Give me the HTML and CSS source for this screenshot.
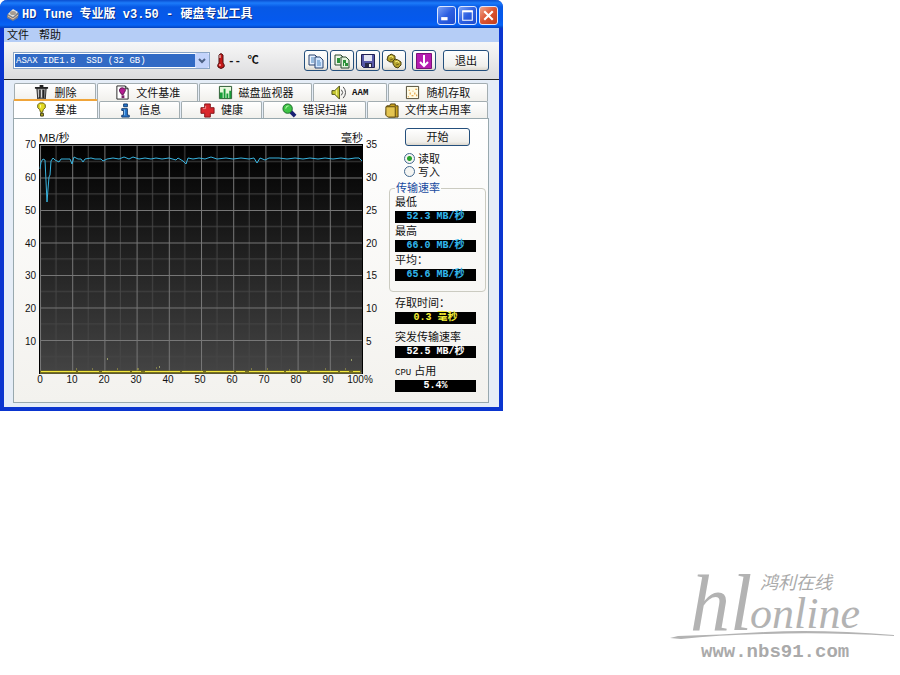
FILE: index.html
```html
<!DOCTYPE html>
<html lang="zh-CN">
<head>
<meta charset="utf-8">
<title>HD Tune 专业版</title>
<link rel="stylesheet" href="styles.css">
</head>
<body>
<div class="page">
<main class="window">
  <header class="titlebar">
    <svg class="app-icon" viewBox="0 0 14 14" aria-hidden="true"><path d="M1 7 6 2l7 3-1 5-5 3-6-3z" fill="#777e8c"/><path d="M2 6 7 1l5 3-5 5z" fill="#dfe1df"/><ellipse cx="7" cy="5" rx="3" ry="2" fill="#a69b90"/><path d="m2 8 5 3 5-4" fill="none" stroke="#f0c8a0"/></svg>
    <h1 class="title">HD Tune 专业版 v3.50 - 硬盘专业工具</h1>
    <button class="caption" aria-label="最小化"><svg viewBox="0 0 16 16"><path d="M3 11h6" stroke="#fff" stroke-width="3"/></svg></button>
    <button class="caption" aria-label="最大化"><svg viewBox="0 0 16 16"><path d="M3.500 4v8.500h9V4" fill="none" stroke="#fff"/><path d="M3 4h10" stroke="#fff" stroke-width="2"/></svg></button>
    <button class="caption caption-close" aria-label="关闭"><svg viewBox="0 0 16 16"><path d="m4 4 8 8m0-8-8 8" stroke="#fff" stroke-width="2"/></svg></button>
  </header>
  <nav class="menubar"><button class="menu">文件</button><button class="menu">帮助</button></nav>
  <div class="toolbar">
    <div class="drive">
      <select class="drive-select" aria-label="硬盘"><option>ASAX IDE1.8&nbsp; SSD (32 GB)</option></select>
      <svg class="drive-arrow" viewBox="0 0 14 15" aria-hidden="true"><rect width="14" height="15" rx="2" fill="#c3d3fb"/><path d="m4 6 3 3 3-3" fill="none" stroke="#4d6185" stroke-width="2"/></svg>
    </div>
    <svg class="thermo" viewBox="0 0 10 18" aria-hidden="true"><path d="M3 3q2-3 4 0v8q2 2 1 4-3 3-6 0-1-2 1-4z" fill="#c31818" stroke="#501010"/><path d="M4 3v3" stroke="#eee"/><circle cx="4" cy="13" r="1" fill="#ff9a9a"/></svg>
    <span class="temp">-- ℃</span>
    <div class="tools">
      <button class="tool" aria-label="复制文本"><svg viewBox="0 0 16 16"><path d="M1 2h6l2 2v8H1z" fill="#e8f2ff" stroke="#28426e"/><path d="M7 4h5l3 3v8H7z" fill="#d4e7ff" stroke="#28426e"/><path d="M3 5h3M3 7h3M3 9h3m3-1h3m-3 2h4m-4 2h4" stroke="#4b84bd"/></svg></button>
      <button class="tool" aria-label="复制图像"><svg viewBox="0 0 16 16"><path d="M1 2h6l2 2v8H1z" fill="#eef7e8" stroke="#2b4930"/><path d="M7 4h5l3 3v8H7z" fill="#e2f4dc" stroke="#2b4930"/><path d="M3 5h3v5H3zm6 2h3v3H9zm2 3h3v3h-3zM9 10h1v3H9z" fill="#2b9238"/></svg></button>
      <button class="tool" aria-label="保存"><svg viewBox="0 0 16 16"><path d="M1.500 1.500h13v13h-11l-2-2z" fill="#5759a8" stroke="#202052"/><path d="M4 2h8v6H4z" fill="#e3e5f2"/><path d="M5 10h7v4H5z" fill="#292b48"/><path d="M9 11h2v3H9z" fill="#eee"/></svg></button>
      <button class="tool" aria-label="选项"><svg viewBox="0 0 16 16"><g fill="#b5a32d" stroke="#4c4210"><path d="m2 3 2-1 1-1 2 1 2 1v3L7 9H4L1 7z"/><path d="m7 8 2-2 3 1 3 2v3l-3 3-3-1-2-3z"/></g><path d="m3 4 3-1 1 2m2 4 3-1 1 2" fill="none" stroke="#f7ed79"/><path d="m4 7 3-1m3 6 3-1" stroke="#75671a"/></svg></button>
      <button class="tool tool-gap" aria-label="最小化到托盘"><svg viewBox="0 0 16 16"><path fill="#b51cb0" stroke="#7c1278" d="M.5.5h15v15H.5z"/><path d="M8 2v11M4 9l4 4 4-4" fill="none" stroke="#fff" stroke-width="2"/></svg></button>
      <button class="exit">退出</button>
    </div>
  </div>
  <div class="workspace">
    <div class="tabs" role="tablist">
      <div class="tab-row tab-row-back">
        <button class="tab" role="tab"><svg viewBox="0 0 16 16"><path d="M3 3h10l-1 12H4z" fill="#999" stroke="#222"/><path d="M1 3h14M6 1h4M6 5v9m4-9v9" stroke="#222" stroke-width="2"/><path d="M5 5v8m3-8v8" stroke="#ddd"/></svg>删除</button>
        <button class="tab" role="tab"><svg viewBox="0 0 16 16"><path d="M2 1h9l3 3v11H2z" fill="#fff" stroke="#222"/><path d="M11 1v3h3" fill="none" stroke="#222"/><path d="M8 3q5 1 2 5L9 10H7L5 7q-1-4 3-4z" fill="#b51c91" stroke="#57134c"/><path d="M7 11h3v3H7z" fill="#792266"/></svg>文件基准</button>
        <button class="tab" role="tab"><svg viewBox="0 0 16 16"><path d="M1.500 1.500h13v13h-13z" fill="#e7f9dc" stroke="#23532b"/><path d="M2 8h3v6H2zm4-4h2v10H6zm3 5h2v5H9zm3-3h2v8h-2z" fill="#179c38"/></svg>磁盘监视器</button>
        <button class="tab" role="tab"><svg viewBox="0 0 16 16"><path d="M1 6h3l5-5v14l-5-5H1z" fill="#c7c933" stroke="#484b13"/><path d="M6 5v6" stroke="#f7f995"/><path d="M11 5q3 3 0 6m2-9q5 6 0 12" fill="none" stroke="#444"/></svg><span class="tab-latin">AAM</span></button>
        <button class="tab" role="tab"><svg viewBox="0 0 16 16"><path d="M1.500 1.500h13v13h-13z" fill="#fffbe4" stroke="#4a4430"/><path d="M3 12h1v1H3zm2-4h1v2H5zm2 3h2v1H7zm1-5h1v1H8zm2 2h1v2h-1zm1-4h2v1h-2zm1 6h1v2h-1zM4 5h1v1H4z" fill="#e08d1a"/></svg>随机存取</button>
      </div>
      <div class="tab-row tab-row-front">
        <button class="tab tab-active" role="tab" aria-selected="true"><svg viewBox="0 0 16 16"><path d="M6 1h4l2 2v3l-2 2-1 3H7L6 8 4 6V3z" fill="#e2d922" stroke="#5b560c"/><path d="M7 3v3" stroke="#fffbb0"/><path d="M7 12h3v3H7z" fill="#b5ab20" stroke="#3c390d"/></svg>基准</button>
        <button class="tab" role="tab"><svg viewBox="0 0 16 16"><path d="M6 1h4v3H6zM4 6h6v7h2v2H4v-2h2V8H4z" fill="#2676ce" stroke="#103a6d"/><path d="M7 7v6" stroke="#82c2f5"/></svg>信息</button>
        <button class="tab" role="tab"><svg viewBox="0 0 16 16"><path d="M5 1h6v4h4v6h-4v4H5v-4H1V5h4z" fill="#d9272d" stroke="#811216"/><path d="M6 3v3H3" fill="none" stroke="#f58e8e"/></svg>健康</button>
        <button class="tab" role="tab"><svg viewBox="0 0 16 16"><path d="m9 9 5 5" stroke="#171f73" stroke-width="4"/><circle cx="6" cy="6" r="5" fill="#3fc446" stroke="#176327"/><path d="M4 6q0-3 3-3" fill="none" stroke="#c9ffb7"/></svg>错误扫描</button>
        <button class="tab" role="tab"><svg viewBox="0 0 16 16"><path d="M3 3h3l1-2h5v2h3v12H5l-3-3z" fill="#cba321" stroke="#503e0b"/><path d="M2 4h10v11H4l-2-2z" fill="#e4c552" stroke="#5b470d"/></svg>文件夹占用率</button>
      </div>
    </div>
    <section class="panel" role="tabpanel">
      <div class="chart">
        <div class="units"><span>MB/秒</span><span>毫秒</span></div>
        <div class="axis axis-left"><span>70</span><span>60</span><span>50</span><span>40</span><span>30</span><span>20</span><span>10</span></div>
        <svg class="plot" viewBox="0 0 324 230" preserveAspectRatio="none" role="img" aria-label="传输速率图">
          <defs>
            <linearGradient id="shade" x2="0" y2="1"><stop stop-color="#000"/><stop offset="1" stop-color="#444"/></linearGradient>
            <pattern id="grid" x="1" y="1" width="32.2" height="32.5" patternUnits="userSpaceOnUse"><path d="M16 0v33M0 16.500h33" stroke="#454545"/><path d="M.5 0v33M0 .5h33" stroke="#777"/></pattern>
          </defs>
          <rect width="324" height="230" fill="url(#shade)"/><rect x="1" y="1" width="322" height="228" fill="url(#grid)"/>
          <path d="M.5 230V.5h323V230" fill="none" stroke="#000"/>
          <path d="M1 25 2 18 4 15 6 16 8 58 9 45 10 33 11 31 12 17 14 14 16 16 18 17 20 18 22 15 31 15 33 20 35 13 39 15 42 15 44 18 46 15 52 14 56 15 62 15 64 17 68 15 74 14 80 15 85 13 90 15 94 13 100 15 106 14 112 15 117 14 123 15 130 14 137 16 139 14 144 17 147 20 149 14 154 15 160 14 166 15 172 13 178 15 187 14 194 15 202 14 210 15 215 14 218 19 221 14 226 16 230 14 240 14 248 15 256 14 264 15 271 14 279 15 286 14 294 15 302 14 309 15 316 14 320 14 323 17" fill="none" stroke="#39b4df" stroke-width="1"/>
          <path d="M1 228h321" stroke="#77701c" stroke-width="3"/>
          <path d="M2 227.500h319" stroke="#f2e73f" stroke-width="1" stroke-dasharray="35 2 21 3 28 2 9 4"/>
          <path d="M37 225h1m15 0h1m24 0h1m19 0h2m17-1h1m94 1h1m15 0h1m21 1h1m35-1h1m19 0h1" stroke="#b7b14a"/>
          <path d="M68 215h1m51 8h1m191-7h1" stroke="#969b68" stroke-width="2"/>
        </svg>
        <div class="axis axis-right"><span>35</span><span>30</span><span>25</span><span>20</span><span>15</span><span>10</span><span>5</span></div>
        <div class="axis-bottom"><span>0</span><span>10</span><span>20</span><span>30</span><span>40</span><span>50</span><span>60</span><span>70</span><span>80</span><span>90</span><span>100%</span></div>
      </div>
      <aside class="side">
        <button class="start">开始</button>
        <div class="modes">
          <label class="mode"><input type="radio" name="mode" checked>读取</label>
          <label class="mode"><input type="radio" name="mode">写入</label>
        </div>
        <fieldset class="rates">
          <legend>传输速率</legend>
          <div class="stat"><span>最低</span><output class="value cyan">52.3 MB/秒</output></div>
          <div class="stat"><span>最高</span><output class="value cyan">66.0 MB/秒</output></div>
          <div class="stat"><span>平均：</span><output class="value cyan">65.6 MB/秒</output></div>
        </fieldset>
        <div class="others">
          <div class="stat"><span>存取时间：</span><output class="value yellow">0.3 毫秒</output></div>
          <div class="stat"><span>突发传输速率</span><output class="value">52.5 MB/秒</output></div>
          <div class="stat"><span><span class="mono">CPU</span> 占用</span><output class="value">5.4%</output></div>
        </div>
      </aside>
    </section>
  </div>
</main>
<footer class="brand">
  <svg class="brand-logo" viewBox="0 -14 226 106" role="img" aria-label="hlonline 鸿利在线">
    <g class="brand-script"><text class="brand-large" x="20" y="60">hl</text><text class="brand-small" x="80" y="58">online</text></g>
    <text class="brand-name" x="90" y="19">鸿利在线</text>
    <path d="M0 68 8 66Q50 65 95 62q55-3 129 3v1q-68-4-128-2Q47 65 11 69z" fill="#b3b3b3"/>
    <text class="brand-url" x="31" y="87">www.nbs91.com</text>
  </svg>
</footer>
</div>
</body>
</html>
```
FILE: styles.css
```css
* { box-sizing: border-box; }
body {
  margin: 0;
  background: #fff;
  color: #111;
  font: 11px/12px "Liberation Sans", "Noto Sans CJK SC", sans-serif;
}
button, input, select { margin: 0; padding: 0; font: inherit; color: inherit; }
svg { display: block; }

.page { min-height: 100vh; display: flex; flex-direction: column; }
.window {
  width: 100%;
  max-width: 503px;
  border: solid #0a35cf;
  border-width: 0 4px 4px;
  border-radius: 7px 7px 0 0;
  background: #e5edf7;
}

.titlebar {
  display: flex;
  align-items: center;
  gap: 2px;
  height: 28px;
  margin: 0 -4px;
  padding: 2px 5px 0 6px;
  border-radius: 7px 7px 0 0;
  background: linear-gradient(#0a4ed0, #1c7bfa 3px, #0759e6 7px, #0559ed 20px, #0663f5 25px, #0442bd);
}
.app-icon { width: 14px; height: 14px; }
.title {
  flex: 1;
  margin: 0;
  color: #fff;
  font: bold 12px/16px "Liberation Mono", "Noto Sans CJK SC", monospace;
  white-space: nowrap;
  text-shadow: 1px 1px #0a318a;
}
.caption {
  width: 19px;
  height: 19px;
  border: 1px solid #dbe6ff;
  border-radius: 3px;
  background: linear-gradient(135deg, #7ba2f7, #2c5fe1 50%, #1d4bce);
}
.caption-close { background: linear-gradient(135deg, #f0a58c, #dc5330 50%, #c23e1c); }

.menubar { display: flex; gap: 10px; height: 14px; padding: 0 3px; background: #b5cdf6; }
.menu { border: 0; background: none; line-height: 12px; }

.toolbar {
  display: flex;
  align-items: center;
  height: 38px;
  padding: 0 10px 0 9px;
  border-bottom: 1px solid #222;
  background: linear-gradient(#f7f7f7, #dcdcde);
}
.drive { position: relative; flex: 0 1 197px; }
.drive-select {
  display: block;
  width: 100%;
  height: 17px;
  padding: 2px 16px 0 2px;
  border: 1px solid #8ba5c5;
  appearance: none;
  background: #316ac5;
  box-shadow: inset 0 0 0 1px #fff;
  color: #fff;
  font: 9px/13px "Liberation Mono", monospace;
}
.drive-arrow { position: absolute; right: 1px; top: 1px; width: 14px; height: 15px; background: #fff; pointer-events: none; }
.thermo { width: 10px; height: 18px; margin: 0 2px 0 6px; }
.temp { font: bold 11px/16px "Liberation Mono", "Noto Sans CJK SC", monospace; white-space: nowrap; }
.tools { display: flex; gap: 2px; margin-left: auto; }
.tool, .exit, .start {
  border: 1px solid #244f7c;
  border-radius: 3px;
  background: linear-gradient(#fff, #f0efeb 80%, #dbd7cd);
}
.tool { display: grid; place-items: center; width: 24px; height: 21px; }
.tool svg { width: 16px; height: 16px; }
.tool-gap { margin-left: 4px; }
.exit { width: 46px; margin-left: 5px; }

.workspace { padding: 3px 10px 4px 9px; }
.tab-row { display: grid; gap: 1px; }
.tab-row-back { grid-template-columns: 82fr 101fr 112fr 74fr 100fr; padding: 0 1px; }
.tab-row-front { grid-template-columns: 85fr 81fr 81fr 103fr 121fr; padding-right: 1px; }
.tab {
  display: flex;
  align-items: center;
  justify-content: center;
  gap: 6px;
  height: 18px;
  border: 1px solid #a3adb1;
  border-bottom: 0;
  border-radius: 2px 2px 0 0;
  background: linear-gradient(#fff, #f1f0ec);
  white-space: nowrap;
}
.tab-row-front .tab { height: 17px; }
.tab svg { width: 15px; height: 15px; flex: none; }
.tab-latin { font: bold 9px/12px "Liberation Mono", monospace; }
.tab-row-front .tab-active { height: 19px; margin-top: -2px; border-top: 2px solid #f0a53a; background: #fff; }

.panel {
  display: flex;
  justify-content: space-between;
  padding: 9px 2px 10px 0;
  border: 1px solid #98a8ae;
  background: linear-gradient(#fff, #f3f2ee);
}
.chart {
  flex: 1 1 auto;
  max-width: 364px;
  display: grid;
  grid-template: 12px 230px 12px / 25px 1fr 15px;
  margin-top: 4px;
}
.units { grid-column: 2; display: flex; justify-content: space-between; }
.axis, .axis-bottom { font-size: 10px; line-height: 12px; }
.axis { display: flex; flex-direction: column; }
.axis span { flex: 1; margin-top: -5px; margin-bottom: 5px; }
.axis-left { grid-column: 1; grid-row: 2; padding-right: 3px; text-align: right; }
.axis-right { grid-column: 3; grid-row: 2; padding-left: 3px; }
.plot { grid-column: 2; width: 100%; height: 230px; }
.axis-bottom { grid-column: 2; display: flex; justify-content: space-between; padding: 0 3px 0 1px; }
.axis-bottom span { display: flex; justify-content: center; width: 0; }

.side { flex: none; width: 97px; }
.start { display: block; width: 65px; height: 18px; margin: 0 0 6px 16px; }
.modes { padding-left: 15px; }
.mode { display: flex; align-items: center; gap: 3px; height: 13px; }
.mode input {
  appearance: none;
  width: 11px;
  height: 11px;
  border: 1px solid #42688f;
  border-radius: 50%;
  background: #f5f5f2;
}
.mode input:checked { background: radial-gradient(circle, #27a22b 2px, #f5f5f2 3px); }
.rates { min-width: 0; margin: 4px 0 0; padding: 0 9px 10px 5px; border: 1px solid #cbcbc1; border-radius: 4px; }
.rates legend { padding: 0 1px; color: #174a9f; line-height: 12px; }
.stat { line-height: 17px; white-space: nowrap; }
.value {
  display: block;
  height: 12px;
  background: #000;
  color: #fff;
  font: bold 10px/12px "Liberation Mono", "Noto Sans CJK SC", monospace;
  text-align: center;
}
.cyan { color: #32b7ec; }
.yellow { color: #f5ee36; }
.mono { font: 9px/12px "Liberation Mono", monospace; }
.others { display: grid; gap: 5px; padding: 3px 10px 0 6px; }

.brand { margin: auto 4px 13px auto; }
.brand-logo { width: 226px; height: 106px; }
.brand-script { fill: #b3b3b3; font-family: "Liberation Serif", serif; font-style: italic; }
.brand-large { font-size: 80px; }
.brand-small { font-size: 44px; }
.brand-name { fill: #aaa; font: italic 18px "Noto Sans CJK SC", sans-serif; }
.brand-url { fill: #aaa; font: bold 19px "Liberation Mono", monospace; }
```
